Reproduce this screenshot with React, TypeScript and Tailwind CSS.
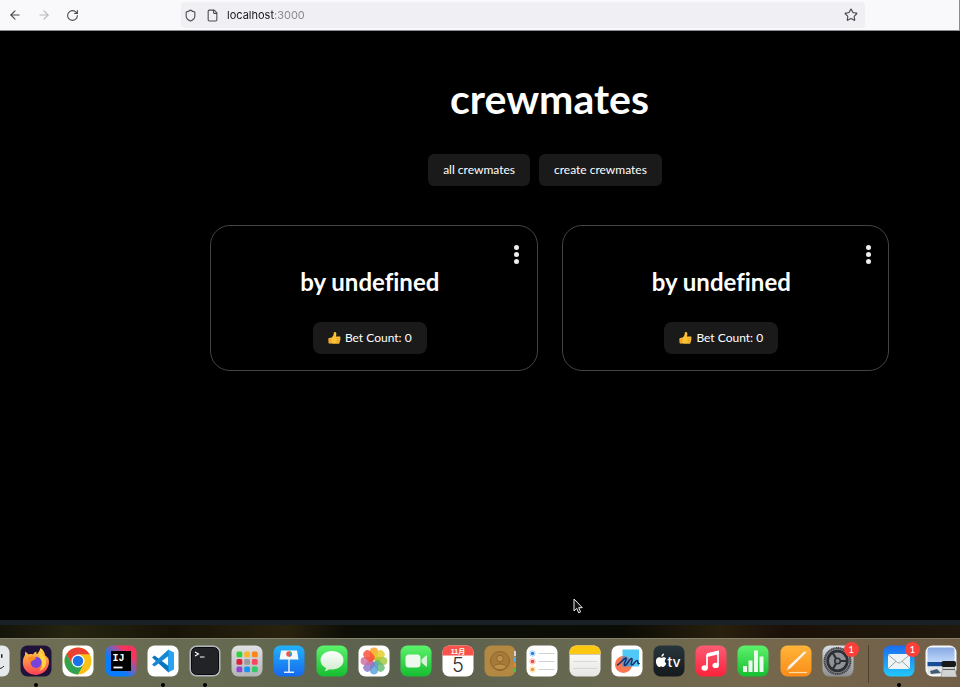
import type { ReactNode } from "react";
import { ArrowLeft, ArrowRight, File, RotateCw, Shield, Star } from "lucide-react";

function Thumb() {
  return (
    <svg role="img" aria-label="thumbs up" viewBox="0 0 16 16" className="size-[13px]">
      <path d="M.6 8.200c0-.5.4-.9.9-.9L4.600 6.800C6.400 5.200 7.200 3.200 7.100.9c0-1.300 2.800-1.200 3.100 1 .2 1.300-.1 2.400-.6 3.600h4.400c1.700 0 1.800 1.900.8 2.300 1 .6.8 2-.2 2.300.7.700.4 1.900-.5 2.200.4 1.100-.2 2.200-1.400 2.300H7.800c-1.200 0-2-.4-3-.6l-3 .2c-.6 0-1-.3-1-.9z" fill="#fdc134" />
      <path d="M10.400 8.200h4M10.400 10.500h3.800M10.400 12.600h3.300" stroke="#d98a1c" strokeWidth=".7" />
      <path d="M.8 8.200 4 7.600v6l-3 .3z" fill="#f2a429" />
    </svg>
  );
}

function Card({ title, bets }: { title: string; bets: number }) {
  return (
    <article className="flex flex-col rounded-[20px] border border-[#444] px-3 pt-4 pb-4">
      <button aria-label="More options" className="flex h-6 w-4 flex-col items-center justify-center gap-[2px] self-end">
        <span className="size-[5px] rounded-full bg-[#eee]" />
        <span className="size-[5px] rounded-full bg-[#eee]" />
        <span className="size-[5px] rounded-full bg-[#eee]" />
      </button>
      <div className="flex flex-col items-center pr-2">
        <h2 className="mb-6 text-2xl/8 font-bold [font-variant-ligatures:none]">{title}</h2>
        <button className="flex h-8 items-center gap-1 rounded-lg bg-[#1a1a1a] px-[15px] text-xs">
          <Thumb />
          <span>Bet Count: {bets}</span>
        </button>
      </div>
    </article>
  );
}

type AppProps = { name: string; bg?: string; children?: ReactNode; running?: boolean; badge?: number };

function DockApp({ name, bg = "#fff", children, running, badge }: AppProps) {
  return (
    <button aria-label={name} className="relative flex h-[42px] w-8 shrink-0 flex-col items-center justify-between">
      <svg viewBox="0 0 32 32" className="size-8">
        <rect x=".5" y=".5" width="31" height="31" rx="7" fill={bg} />
        {children}
      </svg>
      {running && <span className="size-1 rounded-full bg-black" />}
      {badge && (
        <span className="absolute -top-[3px] -right-[5px] flex size-[15px] items-center justify-center rounded-full bg-[#fb4039] text-[10px] text-white">
          {badge}
        </span>
      )}
    </button>
  );
}

function Defs() {
  const grads: [string, string, string][] = [
    ["green", "#5df36c", "#15bd30"],
    ["blue", "#20b2fc", "#1769ed"],
    ["mail", "#1b6cf0", "#22c8fb"],
    ["silver", "#dfe1e3", "#b2b4b6"],
    ["gear", "#d9dde4", "#8d8e92"],
    ["red", "#fb5c74", "#fa233b"],
    ["orange", "#ffb53a", "#fb8c17"],
    ["tv", "#27363b", "#14191c"],
    ["note", "#ffffff", "#e6e6e4"],
    ["bubble", "#ffffff", "#cfeccc"],
    ["flame", "#ffda3b", "#ff3d55"],
    ["sky", "#86a9e5", "#c4dafb"],
  ];
  return (
    <svg aria-hidden="true" className="absolute size-0">
      <defs>
        {grads.map(([id, a, b]) => (
          <linearGradient key={id} id={id} x1="0" y1="0" x2="0" y2="1">
            <stop stopColor={a} />
            <stop offset="1" stopColor={b} />
          </linearGradient>
        ))}
        <linearGradient id="idea" x1="0" y1="1" x2="1" y2="0">
          <stop offset=".35" stopColor="#087cfa" />
          <stop offset=".6" stopColor="#9258a8" />
          <stop offset=".75" stopColor="#fe315d" />
        </linearGradient>
      </defs>
    </svg>
  );
}

const launchColors = ["#32d13c", "#fdb62c", "#fb8418", "#dc203c", "#9b9b9f", "#f94560", "#9344d3", "#1795f5", "#36c86d"];
const petals = ["#f9a11b", "#e3cc25", "#a4c83a", "#62ba72", "#57a4dc", "#8a74c8", "#cf6b9e", "#fa4d35"];

function Dock() {
  return (
    <nav aria-label="Dock" className="flex border-t border-[#85836f] bg-[linear-gradient(90deg,#706f55,#656a50_22%,#5b604e_42%,#676850_60%,#75684c_78%,#725f48)] pt-1.5 pr-[3px]">
      <Defs />
      <div className="-ml-[22px] flex flex-1 justify-between">
        <DockApp name="Finder" bg="#e6eaed">
          <rect x="23" y="9" width="1.500" height="4" rx=".7" fill="#222" />
          <path d="M16 23q7 2 10-2" stroke="#222" fill="none" />
        </DockApp>
        <DockApp name="Firefox" bg="#20123a" running>
          <path d="M20.500 3c3 2 4.200 4.600 4.700 7.400 1.400.8 3 2.300 3.500 4.200 1.700 7-3.700 15-12.500 15.300C9 30.200 2.800 25 2.800 17.600c0-3 .7-5.300 2.200-7.600l.2-3.500 3.500 3c1.300-.5 2.700-.5 4.200-.1 1-1.500 2-2.400 3.500-2.900-.2 1 0 2 .4 2.700 1.600-1.500 2.900-3.500 3.700-6.200z" fill="url(#flame)" />
          <path d="M19.500 7c4.500 2.500 7.500 6.500 6.500 12-.7 3.700-3.500 6-6.800 6.700 3-3 3.700-7 1.300-10.500-1.500-2.300-1.500-4.800-1-8.200z" fill="#ffd43d" />
          <circle cx="16" cy="17.300" r="5.600" fill="#7643dc" />
          <path d="M8.500 12.500c2.500-1.500 5.500-1 8 .5l-2.500 2c-2 .3-3 1.500-3.300 3-2-1-2.700-3-2.200-5.500z" fill="#ff8a1f" />
        </DockApp>
        <DockApp name="Chrome">
          <circle cx="16" cy="16" r="13.500" fill="#fbc116" />
          <path d="M4.310 9.250A13.500 13.500 0 0 1 27.690 9.250H16L10.370 19.250z" fill="#e94235" />
          <path d="M4.310 9.250A13.500 13.500 0 0 0 16 29.500l5.630-10.250H10.370z" fill="#2fa350" />
          <circle cx="16" cy="16" r="6.500" fill="#fff" />
          <circle cx="16" cy="16" r="5.200" fill="#1a73e8" />
        </DockApp>
        <DockApp name="IntelliJ IDEA" bg="url(#idea)">
          <rect x="6" y="6" width="20" height="20" fill="#000" />
          <text x="7.500" y="16" fontSize="10" fontWeight="700" fill="#fff" className="font-['Liberation_Mono',monospace]">IJ</text>
          <path d="M8.500 22.500h9" stroke="#fff" strokeWidth="1.800" />
        </DockApp>
        <DockApp name="Visual Studio Code" running>
          <path d="M21 4.500 27 7.500v17l-6 3z" fill="#29a3ef" />
          <path d="M5 12.500 7.500 10.500 21.500 21v6.500z" fill="#0875bf" />
          <path d="M5 19.500 7.500 21.500 21.500 11V4.500z" fill="#1687d3" />
        </DockApp>
        <DockApp name="Terminal" bg="#b2b6bc" running>
          <rect x="2.500" y="2.500" width="27" height="27" rx="5" fill="#222326" stroke="#08090a" />
          <path d="m6 7 3.500 2L6 11M11 12h4.500" stroke="#fff" fill="none" strokeWidth="1.100" />
        </DockApp>
        <DockApp name="Launchpad" bg="url(#silver)">
          {launchColors.map((c, i) => (
            <rect key={c} x={5.500 + (i % 3) * 7.700} y={6.500 + Math.floor(i / 3) * 7.500} width="5.800" height="5.800" rx="1.500" fill={c} />
          ))}
        </DockApp>
        <DockApp name="Keynote" bg="url(#blue)">
          <path d="M8 5.500h16l1.500 9h-19z" fill="#f4f8fb" />
          <path d="M16 14v13M11 27.300h10" stroke="#e2edf8" strokeWidth="1.500" />
          <circle cx="16" cy="9" r="2.800" fill="#f65444" />
          <path d="M16 9V6.200A2.800 2.800 0 0 1 18.800 9z" fill="#35b966" />
          <path d="M16 9h2.800A2.800 2.800 0 0 1 16 11.800z" fill="#318ce7" />
        </DockApp>
        <DockApp name="Messages" bg="url(#green)">
          <path d="M16 6c6.500 0 11.500 4 11.500 9.200S22.500 24.500 16 24.500q-1.500 0-2.800-.2c-1.200 1-2.800 1.900-4.700 2 1-1 1.400-2 1.400-3.200C6.500 21.300 4.500 18.500 4.500 15.200 4.500 10 9.500 6 16 6z" fill="url(#bubble)" />
        </DockApp>
        <DockApp name="Photos">
          {petals.map((c, i) => (
            <rect key={c} x="11.900" y="2.600" width="8.200" height="12.600" rx="4.100" fill={c} opacity=".82" transform={`rotate(${i * 45} 16 16)`} />
          ))}
        </DockApp>
        <DockApp name="FaceTime" bg="url(#green)">
          <rect x="5.500" y="9.500" width="15" height="13" rx="3.500" fill="#edf9ed" />
          <path d="m21.500 14.500 4.500-4q1-.5 1 .7v9.600q0 1.200-1 .7l-4.500-4z" fill="#d8f2d7" />
        </DockApp>
        <DockApp name="Calendar">
          <path d="M.5 10.500v-3a7 7 0 0 1 7-7h17a7 7 0 0 1 7 7v3z" fill="#f9524a" />
          <text x="16" y="8.500" textAnchor="middle" fontSize="7" fontWeight="700" fill="#fff" className="font-['Liberation_Sans','Noto_Sans_CJK_SC',sans-serif]">11月</text>
          <text x="16" y="27" textAnchor="middle" fontSize="20" fill="#333" className="font-['Inter',sans-serif] font-light">5</text>
        </DockApp>
        <DockApp name="Contacts" bg="#b38843">
          <path d="M30 6h2v5h-2z" fill="#d5d5d5" /><path d="M30 12h2v5h-2z" fill="#62a6e0" />
          <path d="M30 18h2v4h-2z" fill="#ee8a26" /><path d="M30 23h2v4h-2z" fill="#48bd4d" />
          <circle cx="16" cy="16" r="9.500" fill="#a67a38" stroke="#8d672e" />
          <circle cx="16" cy="13.500" r="3.300" fill="#bd9149" stroke="#8d672e" />
          <path d="M9.500 22c1-4 12-4 13 0-3.500 3.500-9.500 3.500-13 0z" fill="#bd9149" stroke="#8d672e" />
        </DockApp>
        <DockApp name="Reminders">
          {["#2187ed", "#ee493f", "#f5992d"].map((c, i) => (
            <g key={c}>
              <circle cx="6.500" cy={8.500 + i * 8} r="2.700" fill="none" stroke={c} strokeWidth=".6" opacity=".6" />
              <circle cx="6.500" cy={8.500 + i * 8} r="1.800" fill={c} />
              <path d={`M12.500 ${8.500 + i * 8}h16`} stroke="#c6c6ca" strokeWidth=".8" />
            </g>
          ))}
        </DockApp>
        <DockApp name="Notes" bg="url(#note)">
          <path d="M.5 9V7.500a7 7 0 0 1 7-7h17a7 7 0 0 1 7 7V9z" fill="#fdc910" />
          <path d="M1 9.500h30" stroke="#b9ac80" strokeWidth=".6" />
          <path d="M4 16.500h24M4 23.500h24" stroke="#d2d2d2" strokeWidth=".8" />
        </DockApp>
        <DockApp name="Freeform">
          <rect x="11.500" y="4.500" width="16.500" height="17" fill="#50c9f7" />
          <circle cx="12.500" cy="19.500" r="8.500" fill="#fb7652" />
          <path d="M11.500 11q8 0 9.500 10.500h-9.500z" fill="#469bdb" />
          <path d="M6.500 20c3-1.500 7-7.500 8.500-7 1.200.4-3 7-1.300 7.500 2 .6 5-7.500 7-7 1.500.4-1.600 6.200.2 6.500 1.600.2 3.400-4.500 5-4.500 1.800 0 0 4 2.300 3" fill="none" stroke="#172f68" strokeWidth="1.500" strokeLinecap="round" />
        </DockApp>
        <DockApp name="Apple TV" bg="url(#tv)">
          <path d="M13.300 18.600c-.6 1.700-1.900 3.400-3.100 3.400-.8 0-1-.5-2-.5s-1.200.5-2 .5c-1.600 0-3.300-3-3.300-5.700 0-2.700 1.700-4 3.300-4 1 0 1.600.6 2.200.6.700 0 1.400-.7 2.500-.7.900 0 1.700.4 2.200 1.200-1.900 1.200-1.700 4.100.2 5.200zM8.400 11.700c-.1-1.700 1.100-3 2.600-3.200.2 1.700-1.100 3.200-2.600 3.200z" fill="#fff" />
          <text x="14.500" y="21.800" fontSize="14" fill="#fff" className="font-['Inter',sans-serif] font-medium">tv</text>
        </DockApp>
        <DockApp name="Music" bg="url(#red)">
          <path d="M12 9.300 23 6.500v13.600M12 9.300v14" fill="none" stroke="#fff" strokeWidth="1.700" />
          <path d="m12 8.500 11.800-2.700v3.500L12 12z" fill="#fff" />
          <ellipse cx="9.700" cy="23" rx="3.200" ry="2.700" fill="#fff" /><ellipse cx="20.700" cy="20.400" rx="3.200" ry="2.700" fill="#fff" />
        </DockApp>
        <DockApp name="Numbers" bg="url(#green)">
          <path d="M6 21h4v6H6zM11.500 15.500h4V27h-4zM17 5.500h4V27h-4zM22.500 11.500h4V27h-4z" fill="#edf9ec" />
        </DockApp>
        <DockApp name="Pages" bg="url(#orange)">
          <path d="m6.500 25.500 2-4.500L24 6.500q2-1 2.500 1L11 23z" fill="#fff3df" stroke="#d9a55d" strokeWidth=".4" />
          <path d="M9 27.500h18" stroke="#ffe0a9" strokeWidth="1.200" />
        </DockApp>
        <DockApp name="System Settings" bg="url(#gear)" badge={1}>
          <circle cx="15.500" cy="16" r="13" fill="#85888c" stroke="#3d4044" strokeWidth="2" strokeDasharray="1.300 .5" />
          <circle cx="15.500" cy="16" r="9.800" fill="#8f9296" stroke="#2d3034" strokeWidth="2.700" />
          <path d="M15.500 16H25M15.500 16l-5-8.500M15.500 16l-5 8.500" stroke="#2d3034" strokeWidth="2.200" />
          <circle cx="15.500" cy="16" r="2.800" fill="#85888c" stroke="#2d3034" strokeWidth="1.600" />
        </DockApp>
      </div>
      <span className="mx-3.5 h-[38px] w-px bg-[#4e4030]" />
      <div className="flex gap-2.5">
        <DockApp name="Mail" bg="url(#mail)" running badge={1}>
          <rect x="5" y="9" width="22" height="15" rx="2" fill="#eef3f6" />
          <path d="m5.500 10 9 7.500q1.500 1.200 3 0l9-7.500M5.500 23.300l7.500-7M26.500 23.300l-7.500-7" fill="none" stroke="#858e95" strokeWidth=".8" />
        </DockApp>
        <DockApp name="Preview" bg="#f7f8fa">
          <path d="M2.500 5q0-2.500 2.500-2.500h22q2.500 0 2.500 2.500v13h-27z" fill="url(#sky)" />
          <path d="M2.500 17h27v4.500h-27z" fill="#174b96" />
          <path d="M2.500 21.500h27V28q0 1.500-2 1.500H5q-2.500 0-2.500-2.500z" fill="#dfe5e8" />
          <path d="m5 26 7-2 4 4-10 1z" fill="#465a70" />
          <path d="M18 21h11l3 11H16z" fill="#d2d3d3" stroke="#777" strokeWidth=".5" />
          <path d="M18 24.500h12" stroke="#5c5e5f" />
          <rect x="16.500" y="16" width="14.500" height="6" rx="2" fill="#18191b" />
        </DockApp>
      </div>
    </nav>
  );
}

export default function App() {
  return (
    <div className="relative flex min-h-screen flex-col overflow-hidden bg-black font-['Lato',sans-serif] text-white">
      <header className="flex h-[31px] items-center border-r border-b border-[#8c8c90] bg-[#f9f9fb] text-[#4a4a50]">
        <div className="flex w-[181px] shrink-0 items-center gap-[15px] pl-2">
          <button aria-label="Back"><ArrowLeft size={14} strokeWidth={2} /></button>
          <button aria-label="Forward" disabled className="text-[#b8b8bd]"><ArrowRight size={14} strokeWidth={2} /></button>
          <button aria-label="Reload"><RotateCw size={13} strokeWidth={2} /></button>
        </div>
        <div className="mr-[94px] flex h-[26px] flex-1 items-center rounded bg-[#f0f0f4] px-[3px]">
          <Shield size={13} strokeWidth={2} className="mr-[9px]" />
          <File size={13} strokeWidth={2} className="mr-2" />
          <input
            aria-label="Address"
            defaultValue="localhost:3000"
            className="min-w-0 flex-1 bg-[linear-gradient(90deg,#15141a_47px,#85858b_47px)] bg-clip-text font-['Inter',sans-serif] text-[11px] text-transparent caret-black outline-none"
          />
          <button aria-label="Bookmark" className="mr-1"><Star size={14} strokeWidth={2} /></button>
        </div>
      </header>

      <main className="flex flex-1 flex-col items-center pt-11 pr-[71px] pl-[210px]">
        <h1 className="text-[41px]/[48px] font-bold">crewmates</h1>
        <nav aria-label="Pages" className="mt-[31px] mb-[39px] flex text-xs">
          <button className="mr-[9px] h-8 rounded-md bg-[#1a1a1a] px-[15px]">all crewmates</button>
          <button className="mr-[9px] h-8 rounded-md bg-[#1a1a1a] px-[15px]">create crewmates</button>
        </nav>
        <section className="grid w-full grid-cols-2 gap-6">
          <Card title="by undefined" bets={0} />
          <Card title="by undefined" bets={0} />
        </section>
      </main>

      <div className="h-[5px] bg-[#1a2126]" />
      <div className="h-[13px] bg-[linear-gradient(90deg,#14140a,#262510_7%,#171407_18%,#29220e_30%,#0d0e06_36%,#0b0c05_65%,#29200d_75%,#1a1008_82%,#21190c)]" />
      <Dock />

      <svg aria-hidden="true" viewBox="0 0 10 16" className="absolute top-[598px] left-[573px] h-4 w-2.5">
        <path d="M1 1v12l2.800-2.600L5.600 14.800l2-.9-1.900-4.200h3.600z" fill="#111" stroke="#eee" strokeWidth="1" />
      </svg>
    </div>
  );
}
